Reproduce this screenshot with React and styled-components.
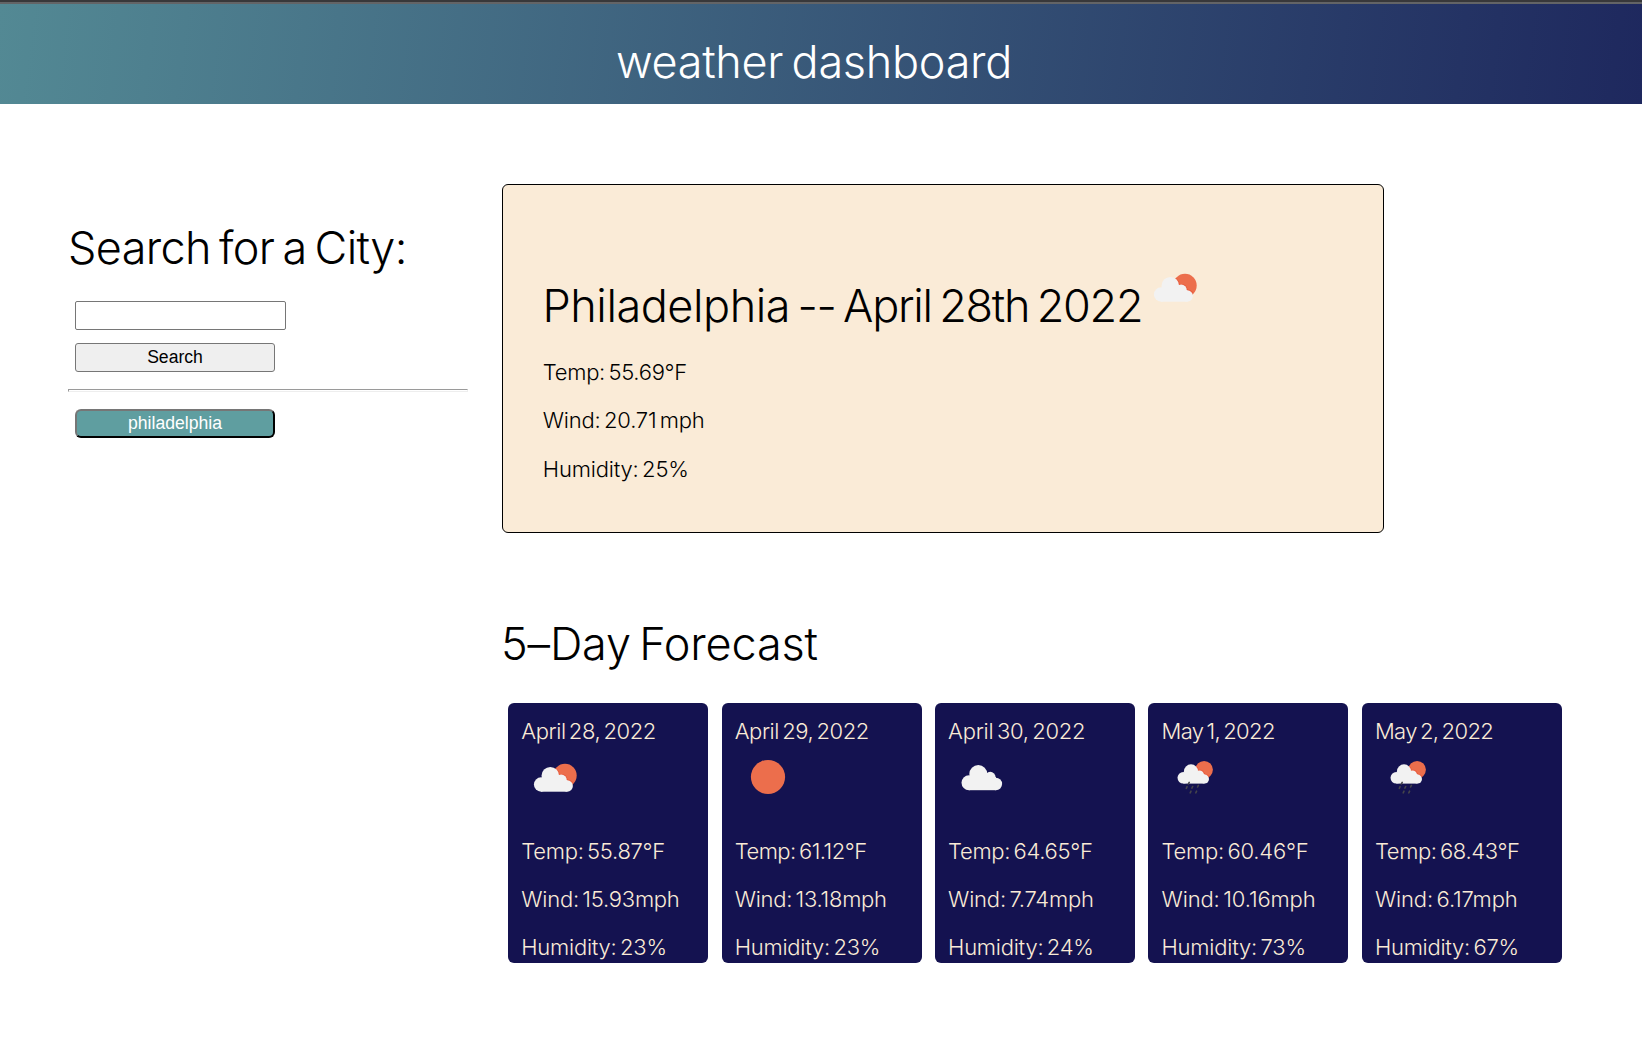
import React from "react";
import styled, { createGlobalStyle } from "styled-components";

const GlobalStyle = createGlobalStyle`
  * { box-sizing: border-box; }
  body {
    margin: 0;
    background: #fff;
    color: #000;
    font-family: Inter, "Liberation Sans", sans-serif;
    font-weight: 300;
  }
`;

const Page = styled.div`
  min-height: 1048px;
  overflow: hidden;
`;

const TopBar = styled.div`
  height: 4px;
  background: #38383a;
  border-bottom: 2px solid #636466;
`;

const Header = styled.header`
  display: flex;
  justify-content: center;
  height: 100px;
  padding: 30px 14px 0 0;
  background: linear-gradient(97deg, #538994, #1e285e);
  color: #fff;
`;

const Heading = styled.h2`
  margin: 0;
  font-size: 45px;
  font-weight: 300;
  line-height: 56px;
  white-space: nowrap;
  word-spacing: -4px;
  letter-spacing: ${(p) => p.$tracking}px;
`;

const CityName = styled.span`
  letter-spacing: -0.45px;
`;

const Line = styled.p`
  margin: 0;
  font-size: 22px;
  line-height: 28px;
  white-space: nowrap;
  word-spacing: -2.5px;
  letter-spacing: ${(p) => p.$tracking}px;
`;

const Layout = styled.div`
  display: flex;
  align-items: flex-start;
  gap: 34px;
  padding: 80px 80px 0 68px;
`;

const Sidebar = styled.aside`
  display: flex;
  flex-direction: column;
  align-items: flex-start;
  width: 400px;
  padding-top: 36px;
`;

const SearchForm = styled.form`
  display: flex;
  flex-direction: column;
  gap: 13px;
  padding: 25px 7px 0;
`;

const SearchInput = styled.input`
  width: 211px;
  height: 29px;
  border: 1px solid #767676;
  border-radius: 2px;
  background: #fff;
  font: 400 17.6px "Liberation Sans", sans-serif;
`;

const Button = styled.button`
  width: 200px;
  height: 29px;
  padding: 1px 0 0;
  border: 1px solid #767676;
  border-radius: 3px;
  background: #efefef;
  color: #000;
  font: 400 17.6px/1 "Liberation Sans", sans-serif;
`;

const CityButton = styled(Button)`
  margin-left: 7px;
  border: 2px outset #767676;
  border-color: #767676 #212121 #212121 #767676;
  border-radius: 6px;
  background: cadetblue;
  color: #fff;
`;

const Divider = styled.hr`
  width: 400px;
  height: 3px;
  margin: 17px 0;
  border: 1px solid;
  border-color: #9a9a9a #eee #eee #9a9a9a;
`;

const Main = styled.main`
  display: flex;
  flex-direction: column;
`;

const Current = styled.section`
  display: flex;
  flex-direction: column;
  width: 882px;
  height: 349px;
  padding: 77.4px 0 0 39.8px;
  border: 1px solid #000;
  border-radius: 6px;
  background: antiquewhite;
`;

const CurrentTitle = styled.div`
  display: flex;
  gap: 8px;
  margin-left: -0.3px;
  margin-bottom: 24.2px;

  ${Heading} { margin-top: 15.6px; }
`;

const Readings = styled.div`
  display: flex;
  flex-direction: column;
  gap: 20.3px;
`;

const ForecastTitle = styled.div`
  margin: 83px 0 31px -1px;
`;

const ForecastRow = styled.div`
  display: flex;
  gap: 13.4px;
  padding-left: 6.15px;
`;

const DayCard = styled.article`
  flex: none;
  display: flex;
  flex-direction: column;
  width: 200px;
  height: 260px;
  padding: 13.5px 0 0 13.2px;
  border-radius: 6px;
  background: #141250;
  color: antiquewhite;

  svg { margin: 7.5px 0 35px 8.6px; }
  ${Readings} { gap: 20px; }
`;

const IconSvg = styled.svg`
  flex: none;
  display: block;
  width: 50px;
  height: 50px;
`;

const SUN = "#ec6e4c";

// Each cloud: [cx, cy, r] lobes plus the flat base [x, y, width, height].
const CLOUDS = {
  cloudy: { lobes: [[12, 30.7, 7.5], [21.3, 22.1, 9], [33.2, 25.2, 5.4], [38.9, 32, 6.2]], base: [12, 25, 27, 13.2] },
  partly: { lobes: [[11.1, 32.5, 7.2], [20.3, 23.8, 8.8], [31.2, 28.2, 5.6], [37.2, 34, 5.7]], base: [11, 28, 26.2, 11.7] },
  rain: { lobes: [[13.3, 25.8, 5.8], [21, 19.4, 7.1], [29.4, 23, 4.6], [34.5, 27.1, 4.5]], base: [13.3, 22, 21.2, 9.6] },
};
const SUNS = { partly: [35, 23.4, 11.7], rain: [34.1, 17.7, 8.8], sunny: [25, 25, 17.1] };
const DROPS = [[18.8, 31.2], [16.7, 35.5], [22.3, 35.3], [28, 34.2], [20.6, 40], [26.2, 40]];

function Cloud({ kind, fill, ...rest }) {
  const { lobes, base } = CLOUDS[kind];
  return (
    <g fill={fill} {...rest}>
      {lobes.map(([cx, cy, r]) => <circle key={cx} cx={cx} cy={cy} r={r} />)}
      <rect x={base[0]} y={base[1]} width={base[2]} height={base[3]} />
    </g>
  );
}

function WeatherIcon({ kind }) {
  const clip = React.useId();
  const sun = SUNS[kind];
  return (
    <IconSvg viewBox="0 0 50 50">
      {sun && (
        <>
          <clipPath id={clip}><circle cx={sun[0]} cy={sun[1]} r={sun[2]} /></clipPath>
          <circle cx={sun[0]} cy={sun[1]} r={sun[2]} fill={SUN} />
        </>
      )}
      {sun && CLOUDS[kind] && (
        <g clipPath={`url(#${clip})`}>
          <Cloud kind={kind} fill="#e85b3d" transform="translate(0.7 -0.7)" />
        </g>
      )}
      {CLOUDS[kind] && <Cloud kind={kind} fill="#f2f2f2" />}
      {kind === "rain" && DROPS.map(([x, y]) => (
        <path key={`${x}-${y}`} d={`M${x + 0.4} ${y - 0.8}l-0.8 1.6`} stroke="#45454a" strokeWidth="1.6" strokeLinecap="round" />
      ))}
    </IconSvg>
  );
}

const CURRENT = [
  ["Temp: 55.69°F", -0.29],
  ["Wind: 20.71 mph", -0.21],
  ["Humidity: 25%", -0.18],
];

const DAYS = [
  { date: ["April 28, 2022", -0.44], icon: "partly", readings: [["Temp: 55.87°F", -0.28], ["Wind: 15.93mph", -0.24], ["Humidity: 23%", -0.24]] },
  { date: ["April 29, 2022", -0.45], icon: "sunny", readings: [["Temp: 61.12°F", -0.52], ["Wind: 13.18mph", -0.27], ["Humidity: 23%", -0.24]] },
  { date: ["April 30, 2022", -0.23], icon: "cloudy", readings: [["Temp: 64.65°F", -0.32], ["Wind: 7.74mph", -0.2], ["Humidity: 24%", -0.24]] },
  { date: ["May 1, 2022", -0.62], icon: "rain", readings: [["Temp: 60.46°F", -0.22], ["Wind: 10.16mph", -0.12], ["Humidity: 73%", -0.2]] },
  { date: ["May 2, 2022", -0.6], icon: "rain", readings: [["Temp: 68.43°F", -0.38], ["Wind: 6.17mph", -0.14], ["Humidity: 67%", -0.25]] },
];

function ReadingList({ items }) {
  return (
    <Readings>
      {items.map(([text, tracking]) => <Line key={text} $tracking={tracking}>{text}</Line>)}
    </Readings>
  );
}

export default function App() {
  return (
    <Page>
      <GlobalStyle />
      <TopBar />
      <Header>
        <Heading as="h1" $tracking={-0.28}>weather dashboard</Heading>
      </Header>
      <Layout>
        <Sidebar>
          <Heading $tracking={-0.63}>Search for a City:</Heading>
          <SearchForm onSubmit={(e) => e.preventDefault()}>
            <SearchInput type="text" aria-label="City" />
            <Button type="submit">Search</Button>
          </SearchForm>
          <Divider />
          <CityButton type="button">philadelphia</CityButton>
        </Sidebar>
        <Main>
          <Current>
            <CurrentTitle>
              <Heading $tracking={-1.26}>
                <CityName>Philadelphia</CityName> -- April 28th 2022
              </Heading>
              <WeatherIcon kind="partly" />
            </CurrentTitle>
            <ReadingList items={CURRENT} />
          </Current>
          <ForecastTitle>
            <Heading $tracking={-0.16}>5–Day Forecast</Heading>
          </ForecastTitle>
          <ForecastRow>
            {DAYS.map((day) => (
              <DayCard key={day.date[0]}>
                <Line $tracking={day.date[1]}>{day.date[0]}</Line>
                <WeatherIcon kind={day.icon} />
                <ReadingList items={day.readings} />
              </DayCard>
            ))}
          </ForecastRow>
        </Main>
      </Layout>
    </Page>
  );
}
